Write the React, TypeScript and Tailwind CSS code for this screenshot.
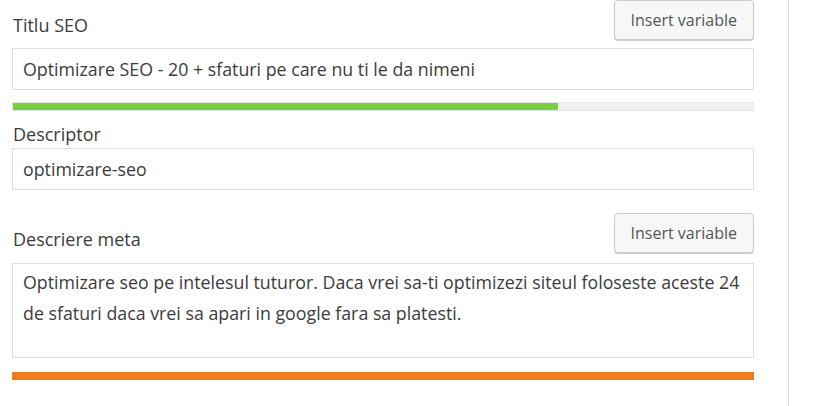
const font = { fontFamily: '"Open Sans", "Noto Sans", sans-serif' };

function InsertButton() {
  return (
    <button
      type="button"
      className="h-[40px] rounded-[4px] border border-[#cccccc] bg-[#f7f7f7] px-[16px] text-[16px] text-[#555555] shadow-[0_1px_0_#cccccc]"
    >
      Insert variable
    </button>
  );
}

function Bar({ value, color }: { value: number; color: string }) {
  return (
    <div className="h-[9px] w-full border border-[#e5e5e5] bg-[#f1f1f1]">
      <div className={`h-full ${color}`} style={{ width: `${value}%` }} />
    </div>
  );
}

export default function App() {
  return (
    <div className="flex h-[406px] w-[820px] bg-white text-[#3c3c3c]" style={font}>
      <div className="w-[788px] pl-[12px] pr-[34px]">
        <div className="flex items-end justify-between">
          <label className="mb-[1px] pl-px text-[18px]">Titlu SEO</label>
          <InsertButton />
        </div>
        <div className="mt-[8px] flex h-[42px] items-center border border-[#dddddd] px-[10px] text-[17.8px]">
          Optimizare SEO - 20 + sfaturi pe care nu ti le da nimeni
        </div>
        <div className="mt-[12px]">
          <Bar value={73.6} color="bg-[#7ad03a]" />
        </div>
        <label className="mt-[11px] block pl-px text-[18px] leading-[24px]">Descriptor</label>
        <div className="mt-[2px] flex h-[42px] items-center border border-[#dddddd] px-[10px] text-[17.8px]">
          optimizare-seo
        </div>
        <div className="mt-[23px] flex items-center justify-between">
          <label className="mt-[12px] pl-px text-[18px]">Descriere meta</label>
          <InsertButton />
        </div>
        <div className="mt-[10px] h-[95px] border border-[#dddddd] py-[3px] pl-[10px] pr-[6px] text-[17.8px] leading-[31px]">
          Optimizare seo pe intelesul tuturor. Daca vrei sa-ti optimizezi siteul foloseste aceste 24
          de sfaturi daca vrei sa apari in google fara sa platesti.
        </div>
        <div className="mt-[14px] h-[8px] w-full bg-[#ee7c1b]" />
      </div>
      <div className="h-full w-px bg-[#d8d8d8]" />
    </div>
  );
}
